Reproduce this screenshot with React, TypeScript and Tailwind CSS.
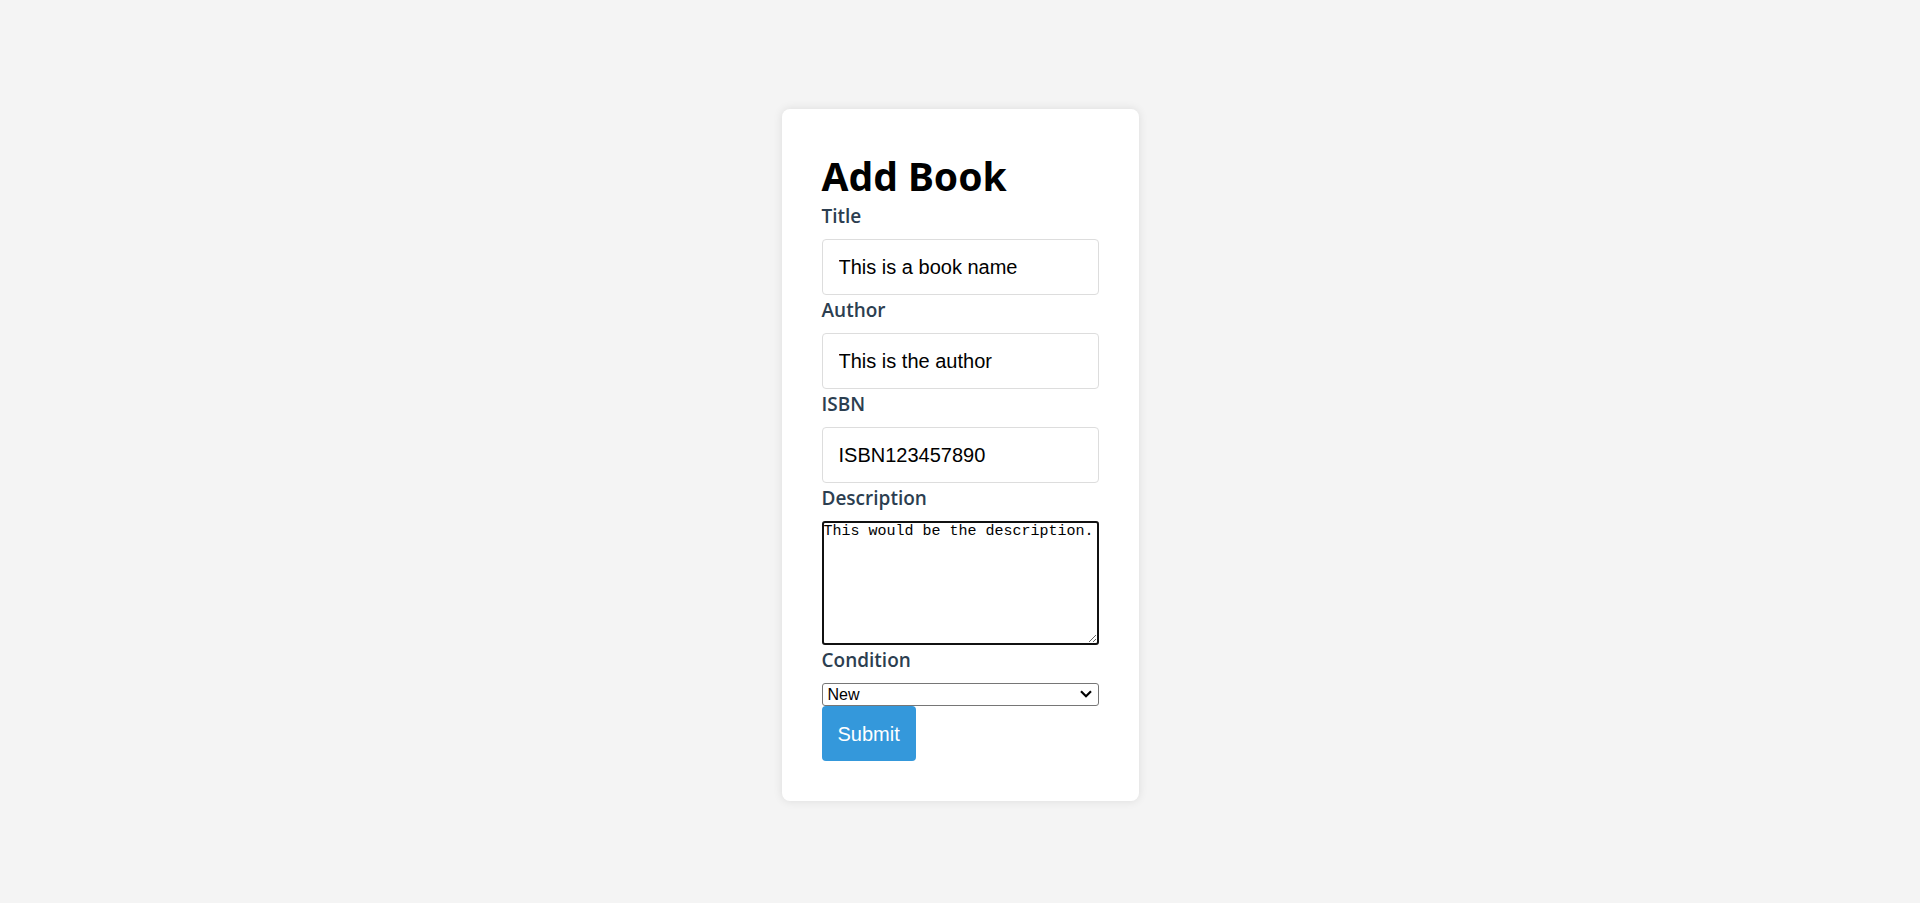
import { useState } from "react";

export default function App() {
  const [title, setTitle] = useState("This is a book name");
  const [author, setAuthor] = useState("This is the author");
  const [isbn, setIsbn] = useState("ISBN123457890");
  const [description, setDescription] = useState("This would be the description.");
  const [condition, setCondition] = useState("New");

  const labelCls =
    "block text-[19px] leading-[30px] mb-2 font-semibold text-[#2c3e50] font-['Open_Sans','Noto_Sans',sans-serif]";
  const inputCls =
    "block w-full h-14 px-4 border border-[#dddddd] rounded-[4px] bg-white text-[20px] text-black font-['Liberation_Sans',Arial,sans-serif] outline-none";

  return (
    <div className="min-h-screen bg-[#f4f4f4] flex justify-center pt-[109px]">
      <div className="w-[357px] h-fit bg-white rounded-[8px] p-10 shadow-[0_0_10px_rgba(0,0,0,0.1)]">
        <h1 className="text-[39px] leading-[52px] pt-px font-bold text-black font-['Noto_Sans',sans-serif]">
          Add Book
        </h1>
        <form onSubmit={e => e.preventDefault()} className="-mt-px">
          {/* TITLE */}
          <label className={labelCls}>Title</label>
          <input className={inputCls} value={title} onChange={e => setTitle(e.target.value)} />

          {/* AUTHOR */}
          <label className={labelCls}>Author</label>
          <input className={inputCls} value={author} onChange={e => setAuthor(e.target.value)} />

          {/* ISBN */}
          <label className={labelCls}>ISBN</label>
          <input className={inputCls} value={isbn} onChange={e => setIsbn(e.target.value)} />

          {/* DESCRIPTION */}
          <label className={labelCls}>Description</label>
          <textarea
            className="block w-full h-[124px] border-2 border-[#111111] rounded-[3px] bg-white text-[15px] leading-[18px] text-black font-['Liberation_Mono',monospace] outline-none"
            value={description}
            onChange={e => setDescription(e.target.value)}
          />

          {/* CONDITION */}
          <label className={labelCls}>Condition</label>
          <div className="relative">
            <select
              className="block w-full h-[23px] appearance-none border border-[#767676] rounded-[3px] bg-white text-[16px] leading-[20px] text-black pl-[5px] font-['Liberation_Sans',Arial,sans-serif]"
              value={condition}
              onChange={e => setCondition(e.target.value)}
            >
              <option>New</option>
              <option>Like New</option>
              <option>Good</option>
              <option>Fair</option>
              <option>Poor</option>
            </select>
            <svg
              className="absolute right-[7px] top-[7px] pointer-events-none"
              width="12"
              height="8"
              viewBox="0 0 12 8"
              fill="none"
            >
              <path d="M1 1.2 L6 6.2 L11 1.2" stroke="#000" strokeWidth="2.2" />
            </svg>
          </div>

          <button
            type="submit"
            className="block h-[55px] px-4 bg-[#3498db] text-white text-[20px] rounded-[4px] font-['Liberation_Sans',Arial,sans-serif]"
          >
            Submit
          </button>
        </form>
      </div>
    </div>
  );
}
